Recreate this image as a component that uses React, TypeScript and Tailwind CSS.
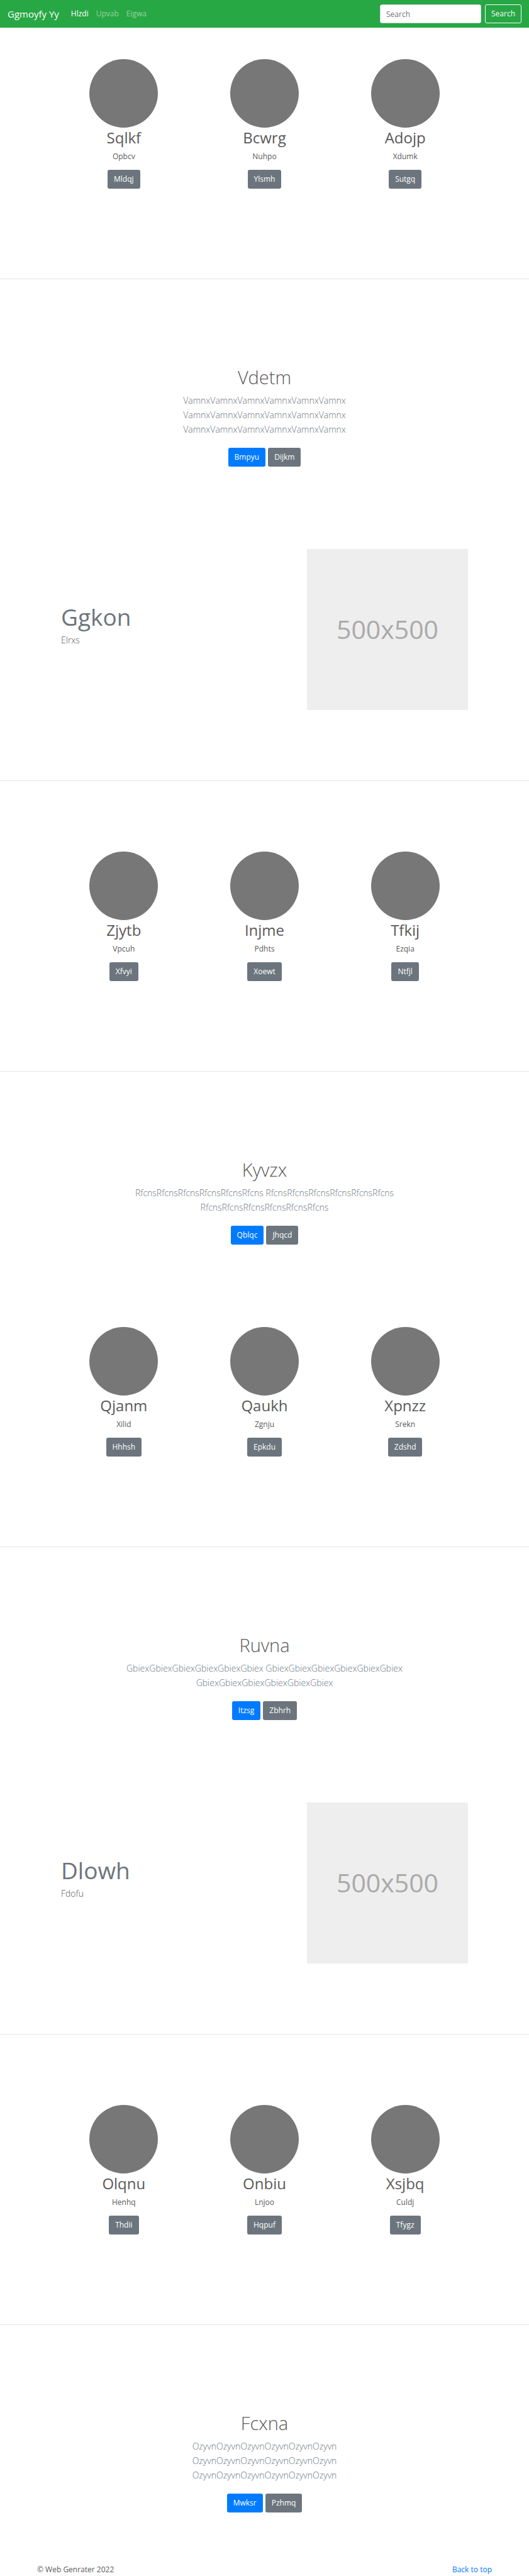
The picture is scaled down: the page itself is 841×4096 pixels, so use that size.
import React from "react";

type Card = { title: string; text: string; action: string };

const SECONDARY =
  "h-[30px] rounded-[3px] bg-[#6c757d] px-[10px] text-[12px] leading-[18px] text-white";
const PRIMARY =
  "h-[30px] rounded-[3px] bg-[#007bff] px-[10px] text-[12px] leading-[18px] text-white";

function Navbar() {
  return (
    <header>
      <nav className="flex items-center bg-[#28a745] px-[12px] py-[7px] text-[12px]">
        <a href="#top" className="mr-[19px] text-[15px] leading-[24px] text-white">
          Ggmoyfy Yy
        </a>
        <ul className="flex flex-1 gap-[12px] leading-[20px]">
          <li>
            <a href="#home" className="text-white">Hlzdi</a>
          </li>
          <li>
            <a href="#link" className="text-white/50">Upvab</a>
          </li>
          <li>
            <a href="#more" className="text-white/50">Eigwa</a>
          </li>
        </ul>
        <form className="flex gap-[6px]" onSubmit={(e) => e.preventDefault()}>
          <input
            type="text"
            aria-label="Search"
            placeholder="Search"
            className="h-[30px] w-[161px] rounded-[3px] border border-[#ced4da] bg-white px-[9px] text-[#495057] placeholder:text-[#6c757d]"
          />
          <button
            type="submit"
            className="h-[30px] rounded-[3px] border border-[#f8f9fa] px-[9px] text-[#f8f9fa]"
          >
            Search
          </button>
        </form>
      </nav>
    </header>
  );
}

function Cards({ items }: { items: Card[] }) {
  return (
    <section className="grid grid-cols-3 px-[85px] pt-[50px] pb-[143px] text-center">
      {items.map((c) => (
        <div key={c.title} className="flex flex-col items-center">
          <div className="size-[109px] rounded-full bg-[#777777]" />
          <h2 className="mb-[4px] text-[24px] leading-[32px]">{c.title}</h2>
          <p className="mb-[12px] text-[12px] leading-[19px]">{c.text}</p>
          <button type="button" className={SECONDARY}>{c.action}</button>
        </div>
      ))}
    </section>
  );
}

function Hero(props: { title: string; word: string; primary: string; secondary: string }) {
  const long = props.word.repeat(6);
  return (
    <section className="px-[195px] pt-[137px] pb-[81px] text-center">
      <h1 className="mb-[6px] text-[29px] leading-[38px] font-light">{props.title}</h1>
      <p className="mb-[18px] text-[14px] leading-[23px] font-light text-[#6c757d]">
        {long} {long} {long}
      </p>
      <div className="flex justify-center gap-[4px]">
        <button type="button" className={PRIMARY}>{props.primary}</button>
        <button type="button" className={SECONDARY}>{props.secondary}</button>
      </div>
    </section>
  );
}

function Feature({ title, text }: { title: string; text: string }) {
  return (
    <section className="flex items-start justify-between px-[97px] pt-[50px] pb-[112px]">
      <div className="pt-[85px]">
        <h2 className="mb-[2px] text-[37px] leading-[46px] text-[#6c757d]">{title}</h2>
        <p className="text-[14px] leading-[23px] font-light">{text}</p>
      </div>
      <div className="flex size-[256px] items-center justify-center bg-[#eeeeee] text-[41px] text-[#aaaaaa]">
        500x500
      </div>
    </section>
  );
}

function Divider() {
  return <hr className="border-t border-[#e5e5e5]" />;
}

export default function App() {
  return (
    <div
      id="top"
      className="bg-white font-['Open_Sans','Noto_Sans',sans-serif] text-[#5a5a5a]"
    >
      <Navbar />
      <main>
        <Cards
          items={[
            { title: "Sqlkf", text: "Opbcv", action: "Mldqj" },
            { title: "Bcwrg", text: "Nuhpo", action: "Ylsmh" },
            { title: "Adojp", text: "Xdumk", action: "Sutgq" },
          ]}
        />
        <Divider />
        <Hero title="Vdetm" word="Vamnx" primary="Bmpyu" secondary="Dijkm" />
        <Feature title="Ggkon" text="Elrxs" />
        <Divider />
        <div className="pt-[62px]">
          <Cards
            items={[
              { title: "Zjytb", text: "Vpcuh", action: "Xfvyi" },
              { title: "Injme", text: "Pdhts", action: "Xoewt" },
              { title: "Tfkij", text: "Ezqia", action: "Ntfjl" },
            ]}
          />
        </div>
        <Divider />
        <Hero title="Kyvzx" word="Rfcns" primary="Qblqc" secondary="Jhqcd" />
        <Cards
          items={[
            { title: "Qjanm", text: "Xilid", action: "Hhhsh" },
            { title: "Qaukh", text: "Zgnju", action: "Epkdu" },
            { title: "Xpnzz", text: "Srekn", action: "Zdshd" },
          ]}
        />
        <Divider />
        <Hero title="Ruvna" word="Gbiex" primary="Itzsg" secondary="Zbhrh" />
        <Feature title="Dlowh" text="Fdofu" />
        <Divider />
        <div className="pt-[62px]">
          <Cards
            items={[
              { title: "Olqnu", text: "Henhq", action: "Thdii" },
              { title: "Onbiu", text: "Lnjoo", action: "Hqpuf" },
              { title: "Xsjbq", text: "Culdj", action: "Tfygz" },
            ]}
          />
        </div>
        <Divider />
        <Hero title="Fcxna" word="Ozyvn" primary="Mwksr" secondary="Pzhmq" />
      </main>
      <footer className="flex justify-between px-[59px] text-[12px] leading-[20px]">
        <p>© Web Genrater 2022</p>
        <a href="#top" className="text-[#007bff]">Back to top</a>
      </footer>
    </div>
  );
}
